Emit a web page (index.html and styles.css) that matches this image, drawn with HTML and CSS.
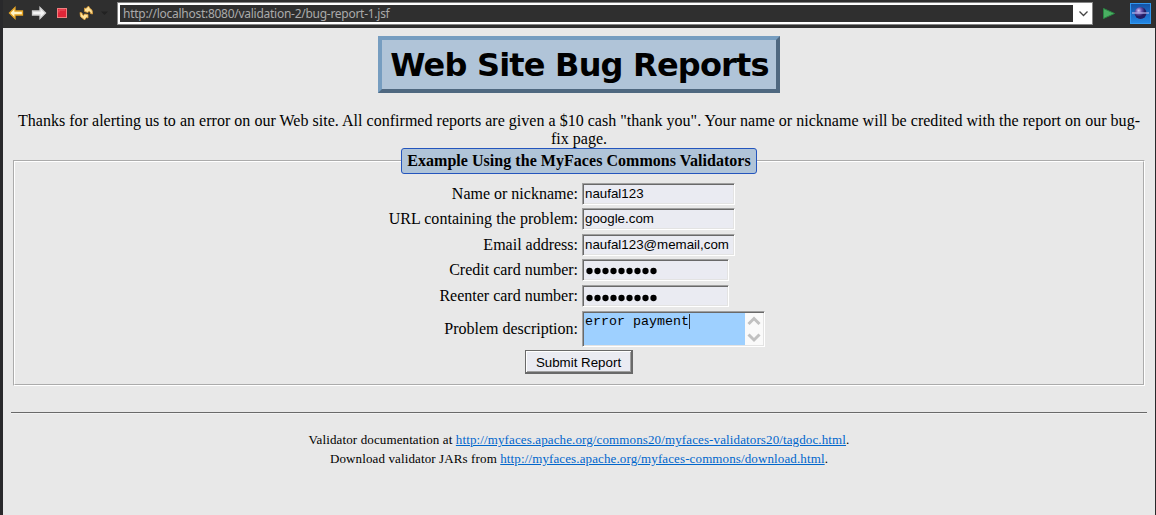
FILE: index.html
```html
<!DOCTYPE html>
<html lang="en">
<head>
<meta charset="utf-8">
<title>Web Site Bug Reports</title>
<link rel="stylesheet" href="styles.css">
</head>
<body>
<header class="toolbar">
  <svg class="tools" width="114" height="27" viewBox="0 0 114 27">
    <path d="M9.500 13 15 7.500V11h7.500v4H15v3.500z" fill="#fff3c4" stroke="#e5a323" stroke-width="1.300"/>
    <path d="M45.500 13 40 7.500V11h-7.500v4H40v3.500z" fill="#f4f4f4" stroke="#d0d0d0" stroke-width="1.300"/>
    <rect x="57.500" y="8.500" width="9" height="9" fill="#df2638" stroke="#f08080"/>
    <path d="M59 12.500V10h6" fill="none" stroke="#ee5560"/>
    <path d="M84.500 11.500V8L86 8.500 88.500 6l1.500 2.500Q93 9.500 92.500 14L90.500 13.500Q90.500 11.500 89 11L88 12.500z" fill="#ffe29a" stroke="#d99a35" stroke-width=".8"/>
    <path d="M88 14.500V18L86.500 17.500 84.500 20 83 18.500Q79.500 17.500 80 12.500L82 13Q82 15 83.500 15.500L84.500 14z" fill="#ffe29a" stroke="#d99a35" stroke-width=".8"/>
    <path d="M101 11.500h7l-3.500 3.500z" fill="#222"/>
  </svg>
  <div class="address">
    <span class="url">http://localhost:8080/validation-2/bug-report-1.jsf</span>
    <svg class="drop" width="19" height="17" viewBox="0 0 19 17"><path d="M6.500 6.500 10.500 10.500 14.500 6.500" fill="none" stroke="#444" stroke-width="1.300"/></svg>
  </div>
  <svg class="actions" width="63" height="27" viewBox="0 0 63 27">
    <defs>
      <linearGradient id="sky" x2="0" y2="1"><stop stop-color="#1451a5"/><stop offset="1" stop-color="#2387e5"/></linearGradient>
      <radialGradient id="orb" cx=".35" cy=".3"><stop stop-color="#d4cbf4"/><stop offset=".5" stop-color="#6b57b0"/><stop offset="1" stop-color="#241c62"/></radialGradient>
    </defs>
    <path d="M10.500 8.500v10l11-5z" fill="#4aaf62" stroke="#2b8744"/>
    <rect x="37.500" y="3.500" width="20" height="20" fill="url(#sky)" stroke="#3197ef"/>
    <circle cx="47.500" cy="13" r="6" fill="url(#orb)"/>
    <path d="M39 13h17" stroke="#b8b5e9" stroke-width="1.200"/>
  </svg>
</header>
<main class="page">
  <h1 class="title"><span class="title-text">Web Site Bug Reports</span></h1>
  <p class="intro"><span class="intro-first">Thanks for alerting us to an error on our Web site. All confirmed reports are given a $10 cash "thank you". Your name or nickname will be credited with the report on our bug-</span><br>fix page.</p>
  <fieldset class="panel">
    <legend class="legend"><span class="legend-text">Example Using the MyFaces Commons Validators</span></legend>
    <form class="form">
      <label class="label l-name">Name or nickname:</label><div class="field">naufal123</div>
      <label class="label l-url">URL containing the problem:</label><div class="field">google.com</div>
      <label class="label l-email">Email address:</label><div class="field">naufal123@memail,com</div>
      <label class="label l-card">Credit card number:</label><div class="field card"><svg width="74" height="17"><path class="dots" d="M4.500 10h70"/></svg></div>
      <label class="label l-again">Reenter card number:</label><div class="field card"><svg width="74" height="17"><path class="dots" d="M4.500 11h70"/></svg></div>
      <label class="label l-desc">Problem description:</label>
      <div class="field area"><span class="area-text">error payment</span><i class="caret"></i>
        <svg class="scroll" width="18" height="32" viewBox="0 0 18 32"><path d="M3.500 11 9 5.500l5.500 5.500M3.500 21.500 9 27l5.500-5.500" fill="none" stroke="#c1c1c1" stroke-width="3"/></svg>
      </div>
      <button class="submit" type="button">Submit Report</button>
    </form>
  </fieldset>
  <hr class="rule">
  <footer class="footer">
    <div class="doc">Validator documentation at <a class="link" href="#">http://myfaces.apache.org/commons20/myfaces-validators20/tagdoc.html</a>.</div>
    <div class="jars">Download validator JARs from <a class="link" href="#">http://myfaces.apache.org/myfaces-commons/download.html</a>.</div>
  </footer>
</main>
</body>
</html>
```
FILE: styles.css
```css
* { box-sizing: border-box; }
body { margin: 0; height: 515px; overflow: hidden; background: #e8e8e8; color: #000; border-left: 3px solid #29292b; border-right: 1px solid #29292b; font: 16px/18px "Liberation Serif", "Times New Roman", serif; }
.toolbar { display: flex; height: 28px; margin: 0 -1px 0 -3px; background: #2f2f2f; }
.tools { flex: none; width: 114px; margin-right: 3px; }
.address { display: flex; width: 976px; height: 23px; margin-top: 2px; border: 1px solid #858585; background: #2f2f2f; outline: 2px solid #fff; outline-offset: -3px; }
.url { flex: 1; padding: 2px 0 0 5px; font: 12px/17px "Noto Sans", sans-serif; letter-spacing: -.27px; color: #aaa; white-space: nowrap; }
.drop { width: 19px; height: 21px; padding: 2px 0; background: #fff; }
.actions { flex: none; }
.page { padding: 8px 8px 0; }
.title { width: 402px; height: 57px; margin: 0 auto; padding-left: 1px; border: 4px solid; border-color: #769dc0 #4f6880 #4f6880 #769dc0; background: #b0c4d8; text-align: center; font: bold 32px/51px "DejaVu Sans", sans-serif; white-space: nowrap; }
.title-text { letter-spacing: -.8px; }
.intro { margin: 19px 0 0; height: 36px; text-align: center; white-space: nowrap; }
.intro-first { letter-spacing: .024px; }
.panel { height: 238px; margin: 0 2px; padding: 0; border: 2px groove #fff; min-width: 0; }
.legend { width: 356px; height: 26px; margin: 0 auto; padding: 0; border: 1px solid #2455bd; border-radius: 3px; background: #b0c4d8; text-align: center; font-weight: bold; line-height: 24px; letter-spacing: .04px; white-space: nowrap; }
.form { display: grid; grid-template-columns: 563px 183px; grid-template-rows: 25px 26px 25px 26px 26px 39px 24px; column-gap: 4px; padding-top: 9px; }
.label { height: 21px; line-height: 22px; text-align: right; white-space: nowrap; }
.l-url { letter-spacing: .04px; }
.field { width: 153px; height: 22px; border: 1px solid; border-color: #a0a0a0 #fff #fff #a0a0a0; box-shadow: inset 1px 1px #696969, inset -1px -1px #e3e3e3; background: #eaebf2; padding: 1px 1px 1px 2px; font: 13.333px/18px "Liberation Sans", Arial, sans-serif; white-space: nowrap; }
.card { width: 147px; }
.dots { fill: none; stroke: #000; stroke-width: 6.300; stroke-linecap: round; stroke-dasharray: 0 8; }
.area { display: flex; width: 183px; height: 36px; background: #9ed0ff; font: 13.333px/17px "Liberation Mono", "Courier New", monospace; }
.l-desc { height: 36px; line-height: 36px; }
.caret { width: 1px; height: 15px; background: #333; margin-top: 1px; }
.scroll { margin-left: auto; background: #fafafa; }
.submit { grid-column: 1 / -1; width: 108px; height: 24px; margin-left: 510px; padding: 2px 0 0; border: 1px solid #696969; border-width: 1px 2px 2px 1px; box-shadow: inset 1px 1px #fff, inset -1px -1px #a0a0a0; background: #eaebf2; font: 13.333px/20px "Liberation Sans", Arial, sans-serif; color: #000; }
.rule { height: 2px; margin: 26px 0 0; border: 0; border-top: 1px solid #696969; border-bottom: 1px solid #f2f2f2; }
.footer { padding-top: 16px; text-align: center; font-size: 13px; line-height: 19px; letter-spacing: .12px; white-space: nowrap; }
.link { color: #0066cc; text-decoration: underline; }
```
